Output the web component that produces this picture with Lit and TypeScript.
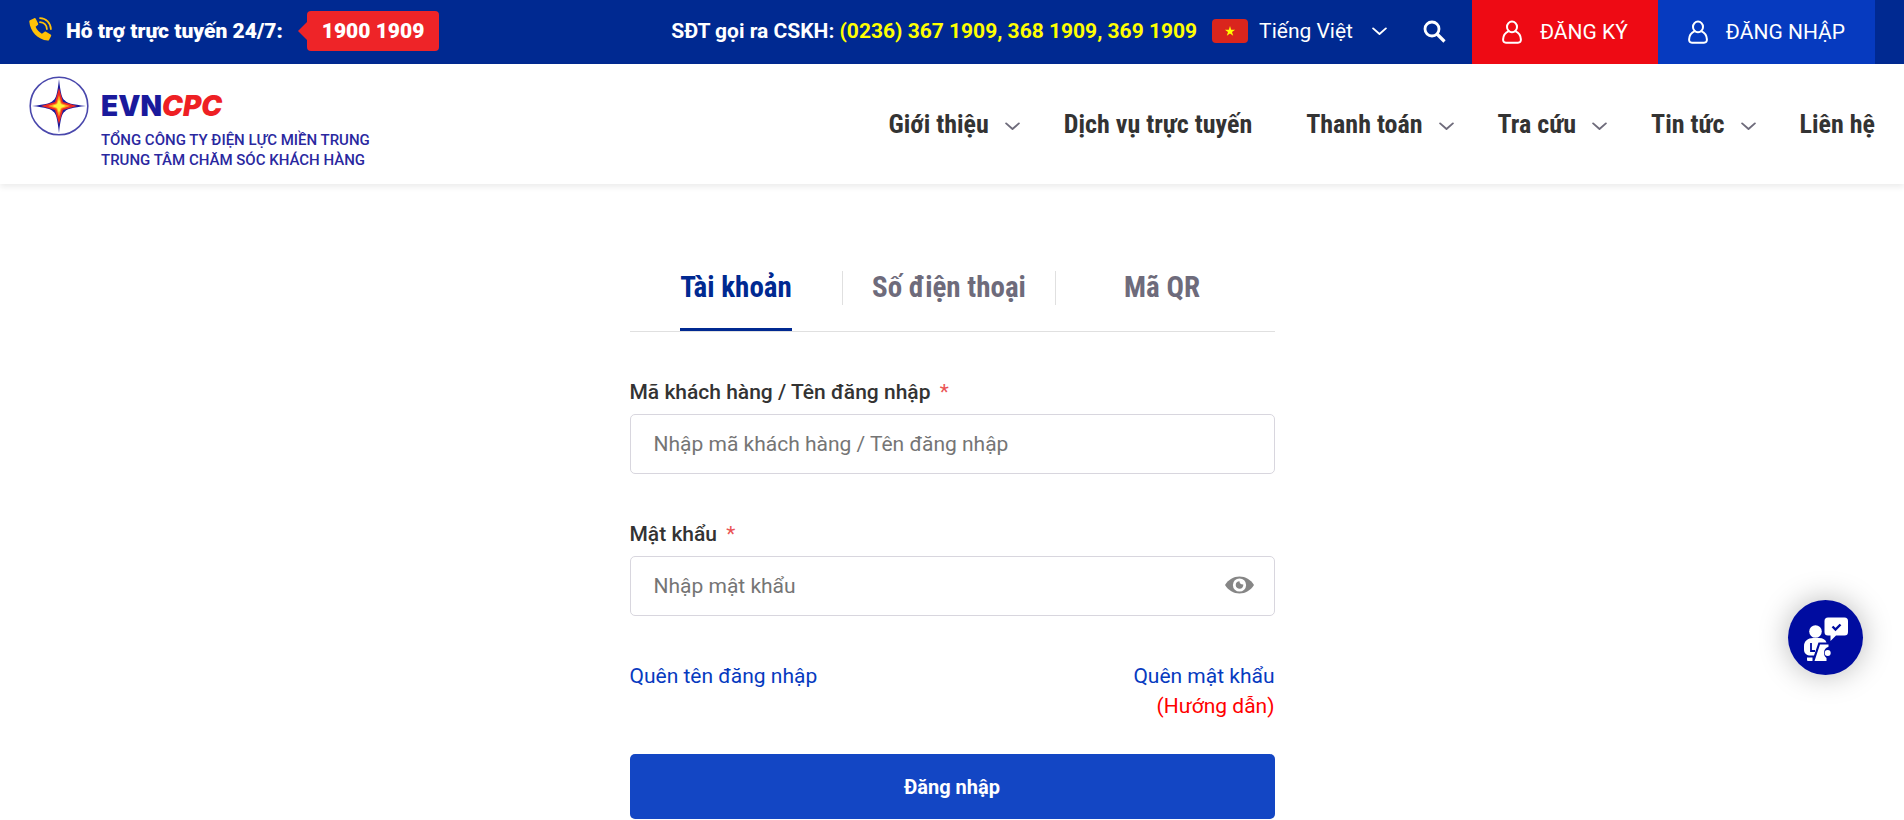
import { LitElement, html, css, svg } from "lit";
import { customElement, state } from "lit/decorators.js";

interface NavItem {
  label: string;
  menu: boolean;
}

const NAV: NavItem[] = [
  { label: "Giới thiệu", menu: true },
  { label: "Dịch vụ trực tuyến", menu: false },
  { label: "Thanh toán", menu: true },
  { label: "Tra cứu", menu: true },
  { label: "Tin tức", menu: true },
  { label: "Liên hệ", menu: false },
];

const TABS = ["Tài khoản", "Số điện thoại", "Mã QR"];

const chevron = html`<svg class="chevron" viewBox="0 0 16 9" aria-hidden="true">
  <path d="M1.2 1.2 8 7.2l6.8-6" />
</svg>`;

const userIcon = html`<svg class="user" viewBox="0 0 20 24" aria-hidden="true">
  <ellipse cx="10" cy="6.900" rx="5" ry="5.300" />
  <path d="M6.800 11.200C3.400 12.600 1.300 15.700 1.100 19.400c-.1 2.200.9 3.300 2.900 3.300h12c2 0 3-1.100 2.900-3.300-.2-3.700-2.300-6.800-5.700-8.200" />
</svg>`;

const star = svg`<path fill="#1a1a9c" d="M30 3C31.500 17 33 23 36 24.500 38 27 43 28.500 57 30 43 31.500 38 33 36 35.500 33 37 31.500 43 30 57 28.500 43 27 37 24 35.500 22 33 17 31.500 3 30 17 28.500 22 27 24 24.500 27 23 28.500 17 30 3Z"/>
  <path fill="#ee2a24" d="M30 12 34 26 48 30 34 34 30 48 26 34 12 30 26 26Z"/>
  <path fill="#ff9a1f" d="M30 19 32.700 27.300 41 30 32.700 32.700 30 41 27.300 32.700 19 30 27.300 27.300Z"/>
  <path fill="#fff23a" d="M30 23 31.900 28.100 37 30 31.900 31.900 30 37 28.100 31.900 23 30 28.100 28.100Z"/>`;

@customElement("app-root")
export class AppRoot extends LitElement {
  @state() private tab = 0;
  @state() private reveal = false;

  static styles = css`
    :host {
      display: block;
      min-height: 100vh;
      background: #fff;
      color: #333;
      font-family: Roboto, "Liberation Sans", sans-serif;
      font-size: 21px;
      line-height: 30px;
    }
    * {
      box-sizing: border-box;
    }
    a {
      color: inherit;
      text-decoration: none;
    }
    button {
      font: inherit;
      color: inherit;
      background: none;
      border: 0;
      padding: 0;
      cursor: pointer;
    }
    svg {
      display: block;
      flex: none;
    }
    .chevron {
      width: 15px;
      height: 9px;
      fill: none;
      stroke: currentColor;
      stroke-width: 2;
      stroke-linecap: round;
      stroke-linejoin: round;
    }
    .topbar {
      display: flex;
      justify-content: space-between;
      height: 64px;
      padding: 0 29px;
      background: #002991;
      color: #fff;
    }
    .support {
      display: flex;
      align-items: center;
      padding-bottom: 2px;
      font-weight: 900;
    }
    .phone {
      width: 23px;
      height: 24px;
      margin-right: 14px;
      margin-bottom: 4px;
    }
    .hotline {
      display: flex;
      align-items: center;
      margin-left: 15px;
    }
    .arrow {
      width: 9px;
      height: 18px;
    }
    .number {
      padding: 5px 15px;
      border-radius: 4px;
      background: #ee2428;
    }
    .tools {
      display: flex;
    }
    .contact {
      display: flex;
      align-items: center;
      padding-bottom: 2px;
    }
    .outgoing {
      font-weight: 700;
      margin-right: 15px;
    }
    .outgoing .list {
      color: #ff0;
    }
    .language {
      display: flex;
      align-items: center;
    }
    .flag {
      width: 36px;
      height: 24px;
      margin-right: 11px;
    }
    .language .chevron {
      margin-left: 19px;
    }
    .search {
      margin: 0 26px 0 36px;
    }
    .search svg {
      width: 23px;
      height: 23px;
    }
    .account {
      display: flex;
      align-items: center;
      gap: 18px;
      padding: 0 30px;
    }
    .register {
      background: #ee0a14;
    }
    .login {
      background: #063abf;
    }
    .user {
      width: 20px;
      height: 24px;
      fill: none;
      stroke: currentColor;
      stroke-width: 2;
    }
    .header {
      display: flex;
      justify-content: space-between;
      height: 120px;
      padding: 0 29px;
      box-shadow: 0 3px 6px rgba(0, 0, 0, 0.08);
    }
    .brand {
      display: flex;
      gap: 12px;
      padding-top: 12px;
      color: #1a1a9c;
    }
    .emblem {
      width: 60px;
      height: 60px;
    }
    .wordmark {
      margin-top: 15px;
      font-family: Inter, "Liberation Sans", sans-serif;
      font-size: 28px;
      font-weight: 900;
      line-height: 30px;
    }
    .wordmark .unit {
      color: #ee2024;
      font-style: italic;
    }
    .tagline {
      margin-top: 9px;
      color: #2a289f;
      font-size: 15px;
      font-weight: 500;
      line-height: 20px;
    }
    .nav {
      display: flex;
      align-items: center;
      gap: 44px;
      font-family: "Roboto Condensed", Roboto, sans-serif;
      font-size: 26px;
      font-weight: 700;
      line-height: 32px;
    }
    .item {
      display: flex;
      align-items: center;
      gap: 16px;
    }
    .item.plain {
      padding-right: 10px;
    }
    .item.plain:last-child {
      padding-right: 0;
    }
    .item .chevron {
      color: #6e6b7b;
      margin-top: 4px;
    }
    .panel {
      width: 100%;
      max-width: 645px;
      margin: 0 auto;
      padding-top: 80px;
    }
    .tabs {
      display: grid;
      grid-template-columns: repeat(3, 1fr);
      padding-right: 6px;
      border-bottom: 1px solid #e0e0e0;
      color: #6e6b7b;
      font-family: "Roboto Condensed", Roboto, sans-serif;
      font-size: 29px;
      font-weight: 700;
      line-height: 46px;
    }
    .cell {
      display: grid;
      justify-items: center;
      background: linear-gradient(#e0e0e0, #e0e0e0) right 7px / 1px 34px no-repeat;
    }
    .cell:last-child {
      background: none;
    }
    .tab {
      padding-bottom: 18px;
      border-bottom: 3px solid transparent;
    }
    .tab.active {
      color: #002991;
      border-color: #002991;
    }
    .form {
      display: grid;
      padding-top: 45px;
    }
    .label {
      display: block;
      margin-bottom: 7px;
      font-weight: 500;
    }
    .required {
      color: #ea5455;
      font-weight: 400;
      margin-left: 4px;
    }
    .field {
      display: flex;
      align-items: center;
      height: 60px;
      margin-bottom: 45px;
      border: 1px solid #d8d6de;
      border-radius: 5px;
      padding: 0 20px 0 23px;
    }
    .input {
      flex: 1;
      min-width: 0;
      height: 100%;
      padding: 0;
      border: 0;
      outline: 0;
      background: none;
      font: inherit;
      color: #333;
    }
    .input::placeholder {
      color: #757575;
      opacity: 1;
    }
    .eye {
      width: 29px;
      height: 20px;
      margin-bottom: 2px;
    }
    .links {
      display: flex;
      justify-content: space-between;
      margin-bottom: 33px;
      color: #063abf;
    }
    .help {
      display: grid;
      justify-items: end;
    }
    .guide {
      color: #f00;
    }
    .submit {
      height: 65px;
      border-radius: 5px;
      background: #1346c4;
      color: #fff;
      font-size: 20px;
      font-weight: 700;
    }
    .chat {
      position: fixed;
      right: 41px;
      bottom: 145px;
      width: 75px;
      height: 75px;
      border-radius: 50%;
      background: #000ca0;
      box-shadow: 0 0 30px rgba(0, 0, 0, 0.28);
    }
    .chat svg {
      width: 75px;
      height: 75px;
    }
  `;

  render() {
    return html`
      <div class="topbar">
        <div class="support">
          <svg class="phone" viewBox="0 0 23 24" aria-hidden="true">
            <path fill="#ffc107" d="M1 3.200 5.200 1.200c.6-.3 1.300 0 1.600.6l2.300 4.600c.3.600.1 1.200-.3 1.600L6.600 9.800c1.400 3.200 3.300 5.300 6.300 6.900l2.500-1.800c.5-.4 1.100-.4 1.600-.1l4.600 2.800c.6.400.8 1.100.4 1.700l-2 3.700c-.3.500-.8.700-1.300.6C8.600 22.300 1.200 14.600.3 4.400c0-.5.200-1 .7-1.200Z" />
            <path fill="none" stroke="#ffc107" stroke-width="1.700" stroke-linecap="round" d="M11 1.100c6.200.3 10.600 4.800 10.900 11M11 5.200c4 .3 6.600 3 6.900 6.900" />
          </svg>
          <span>Hỗ trợ trực tuyến 24/7:</span>
          <a class="hotline" href="#hotline">
            <svg class="arrow" viewBox="0 0 9 18" aria-hidden="true"><path fill="#ee2428" d="M0 9 9 0v18Z" /></svg>
            <span class="number">1900 1909</span>
          </a>
        </div>
        <div class="tools">
          <div class="contact">
            <span class="outgoing">SĐT gọi ra CSKH: <span class="list">(0236) 367 1909, 368 1909, 369 1909</span></span>
            <button class="language" type="button">
              <svg class="flag" viewBox="0 0 36 24" aria-hidden="true">
                <rect width="36" height="24" rx="4" fill="#da251d" />
                <path fill="#ff0" d="m18 7 1.200 3.700h3.900l-3.100 2.300 1.200 3.700-3.200-2.300-3.200 2.300 1.200-3.700-3.100-2.300h3.900Z" />
              </svg>
              <span>Tiếng Việt</span>
              ${chevron}
            </button>
            <button class="search" type="button" aria-label="Tìm kiếm">
              <svg viewBox="0 0 23 23" fill="none" stroke="#fff" aria-hidden="true">
                <circle cx="9" cy="9" r="7" stroke-width="2.800" />
                <path d="m14 14 7.500 7.500" stroke-width="3.200" />
              </svg>
            </button>
          </div>
          <a class="account register" href="#register">${userIcon}<span>ĐĂNG KÝ</span></a>
          <a class="account login" href="#login">${userIcon}<span>ĐĂNG NHẬP</span></a>
        </div>
      </div>

      <header class="header">
        <a class="brand" href="#home">
          <svg class="emblem" viewBox="0 0 60 60" aria-hidden="true">
            <circle cx="30" cy="30" r="28.800" fill="#fff" stroke="#4a48ac" stroke-width="1.600" />
            ${star}
          </svg>
          <div>
            <div class="wordmark">EVN<span class="unit">CPC</span></div>
            <div class="tagline">TỔNG CÔNG TY ĐIỆN LỰC MIỀN TRUNG<br />TRUNG TÂM CHĂM SÓC KHÁCH HÀNG</div>
          </div>
        </a>
        <nav class="nav">
          ${NAV.map(
            (n) => html`<a class="item ${n.menu ? "" : "plain"}" href="#nav">${n.label}${n.menu ? chevron : ""}</a>`
          )}
        </nav>
      </header>

      <main class="panel">
        <div class="tabs" role="tablist">
          ${TABS.map(
            (t, i) => html`<div class="cell">
              <button
                class="tab ${this.tab === i ? "active" : ""}"
                type="button"
                role="tab"
                aria-selected=${this.tab === i}
                @click=${() => (this.tab = i)}
              >${t}</button>
            </div>`
          )}
        </div>
        <form class="form" @submit=${(e: Event) => e.preventDefault()}>
          <label class="label" for="username">Mã khách hàng / Tên đăng nhập <span class="required">*</span></label>
          <div class="field">
            <input class="input" id="username" type="text" placeholder="Nhập mã khách hàng / Tên đăng nhập" />
          </div>
          <label class="label" for="password">Mật khẩu <span class="required">*</span></label>
          <div class="field">
            <input class="input" id="password" type=${this.reveal ? "text" : "password"} placeholder="Nhập mật khẩu" />
            <button type="button" aria-label="Hiện mật khẩu" @click=${() => (this.reveal = !this.reveal)}>
              <svg class="eye" viewBox="0 0 29 20" aria-hidden="true">
                <path fill="#868686" d="M0 10C3.500 4.500 8.500 1.500 14.500 1.500S25.500 4.500 29 10c-3.500 5.500-8.500 8.500-14.500 8.500S3.500 15.500 0 10Z" />
                <circle cx="14.500" cy="10" r="6.600" fill="#fff" />
                <path fill="#868686" d="M14.500 6.200c0 1.800.8 3.200 3.800 3.400a3.800 3.800 0 1 1-3.800-3.400Z" />
              </svg>
            </button>
          </div>
          <div class="links">
            <a href="#forgot-name">Quên tên đăng nhập</a>
            <div class="help">
              <a href="#forgot-password">Quên mật khẩu</a>
              <a class="guide" href="#guide">(Hướng dẫn)</a>
            </div>
          </div>
          <button class="submit" type="submit">Đăng nhập</button>
        </form>
      </main>

      <button class="chat" type="button" aria-label="Chăm sóc khách hàng">
        <svg viewBox="0 0 75 75" fill="#fff" aria-hidden="true">
          <circle cx="27.500" cy="31.500" r="6.300" />
          <path d="M40 17.500h16.500a3.500 3.500 0 0 1 3.500 3.500v11a3.500 3.500 0 0 1-3.500 3.500H48L42.500 41v-5.500H40a3.500 3.500 0 0 1-3.500-3.500V21a3.500 3.500 0 0 1 3.500-3.500Z" />
          <path d="m44.500 26.500 3 3 5-5" fill="none" stroke="#000ca0" stroke-width="2.400" />
          <path d="M25 38h6c4 0 6.500 1.500 7.500 4.500H30.500l-4.500 13h-3.500c-3.500 0-6.500-2-6.500-6V46c0-5 4-8 9-8Z" />
          <path d="M23 43v8h4" fill="none" stroke="#000ca0" stroke-width="1.800" />
          <path d="M19 57.500h5.500V61H20a1 1 0 0 1-1-1Z" />
          <path d="M32 44.500h8.500v2.300a6.500 6.500 0 0 0-4.500 6.200c0 2.300 1 4 2.500 5V61H26.500Z" />
          <circle cx="39.700" cy="53" r="3" />
        </svg>
      </button>
    `;
  }
}
